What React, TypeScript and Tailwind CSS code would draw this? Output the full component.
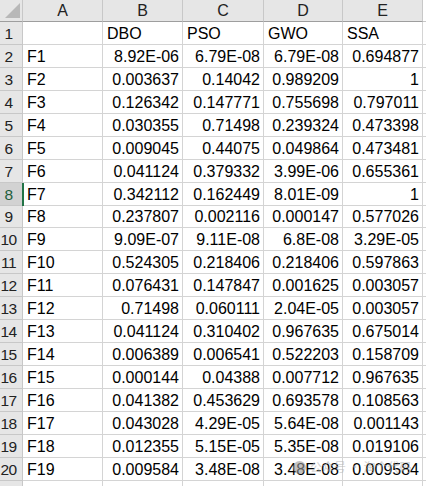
import React from "react";

const cols = ["A", "B", "C", "D", "E"];
const widths = ["w-[80px]", "w-[80px]", "w-[81px]", "w-[79px]", "w-[80px]"];

const data: string[][] = [
  ["", "DBO", "PSO", "GWO", "SSA"],
  ["F1", "8.92E-06", "6.79E-08", "6.79E-08", "0.694877"],
  ["F2", "0.003637", "0.14042", "0.989209", "1"],
  ["F3", "0.126342", "0.147771", "0.755698", "0.797011"],
  ["F4", "0.030355", "0.71498", "0.239324", "0.473398"],
  ["F5", "0.009045", "0.44075", "0.049864", "0.473481"],
  ["F6", "0.041124", "0.379332", "3.99E-06", "0.655361"],
  ["F7", "0.342112", "0.162449", "8.01E-09", "1"],
  ["F8", "0.237807", "0.002116", "0.000147", "0.577026"],
  ["F9", "9.09E-07", "9.11E-08", "6.8E-08", "3.29E-05"],
  ["F10", "0.524305", "0.218406", "0.218406", "0.597863"],
  ["F11", "0.076431", "0.147847", "0.001625", "0.003057"],
  ["F12", "0.71498", "0.060111", "2.04E-05", "0.003057"],
  ["F13", "0.041124", "0.310402", "0.967635", "0.675014"],
  ["F14", "0.006389", "0.006541", "0.522203", "0.158709"],
  ["F15", "0.000144", "0.04388", "0.007712", "0.967635"],
  ["F16", "0.041382", "0.453629", "0.693578", "0.108563"],
  ["F17", "0.043028", "4.29E-05", "5.64E-08", "0.001143"],
  ["F18", "0.012355", "5.15E-05", "5.35E-08", "0.019106"],
  ["F19", "0.009584", "3.48E-08", "3.48E-08", "0.009584"],
  ["", "", "", "", ""],
];

export default function App() {
  return (
    <div
      className="relative w-[426px] h-[486px] overflow-hidden bg-white text-black"
      style={{ fontFamily: '"Liberation Sans", Arial, "Noto Sans CJK SC", sans-serif' }}
    >
      {/* header row */}
      <div className="flex h-[22px]">
        <div className="relative w-[23px] shrink-0 bg-[#e6e6e6] border-r border-b border-r-[#c8c8c8] border-b-[#9e9e9e]">
          <svg className="absolute left-[5px] top-[3px]" width="15" height="15" viewBox="0 0 15 15">
            <polygon points="15,0 15,15 0,15" fill="#b8b8b8" />
          </svg>
        </div>
        {cols.map((c, i) => (
          <div
            key={c}
            className={`${widths[i]} shrink-0 bg-[#e6e6e6] border-r border-b border-r-[#c8c8c8] border-b-[#9e9e9e] flex items-center justify-center text-[16px] leading-[20px] text-[#222]`}
          >
            {c}
          </div>
        ))}
        <div className="flex-1 bg-white border-b border-b-[#c8c8c8]" />
      </div>

      {data.map((row, r) => {
        const selected = r === 7;
        const last = r === data.length - 1;
        return (
          <div key={r} className="flex h-[22.95px]">
            <div
              className={`relative w-[23px] shrink-0 border-r border-b border-r-[#c8c8c8] border-b-[#c8c8c8] flex items-end justify-center pr-[5px] text-[15.5px] leading-[21px] ${
                selected ? "bg-[#d2d2d2] text-[#1e5e3b]" : "bg-[#e6e6e6] text-[#222]"
              }`}
            >
              {!last && <span className="whitespace-nowrap tracking-[-0.5px]">{r + 1}</span>}
              {selected && <div className="absolute right-[-2px] top-0 bottom-[-1px] w-[2px] bg-[#217346]" />}
            </div>
            {row.map((v, i) => {
              const isNum = r > 0 && i > 0;
              return (
                <div
                  key={i}
                  className={`${widths[i]} shrink-0 border-r border-b border-[#d4d4d4] flex items-end text-[16px] leading-[21px] whitespace-nowrap overflow-hidden ${
                    isNum ? "justify-end pr-[3px]" : "justify-start pl-[4px]"
                  }`}
                >
                  {v}
                </div>
              );
            })}
            <div className="flex-1 border-b border-[#d4d4d4]" />
          </div>
        );
      })}

      {/* watermark */}
      <div className="absolute left-[293px] top-[460px] flex items-center gap-[4px] text-[12px] leading-[14px] text-[#b4b4b4] opacity-60 pointer-events-none">
        <div className="w-[13px] h-[13px] rounded-full bg-[#9a9a9a]" />
        <span style={{ fontFamily: '"Noto Sans CJK SC", sans-serif' }}>公众号 · 淘个代码</span>
      </div>
    </div>
  );
}
